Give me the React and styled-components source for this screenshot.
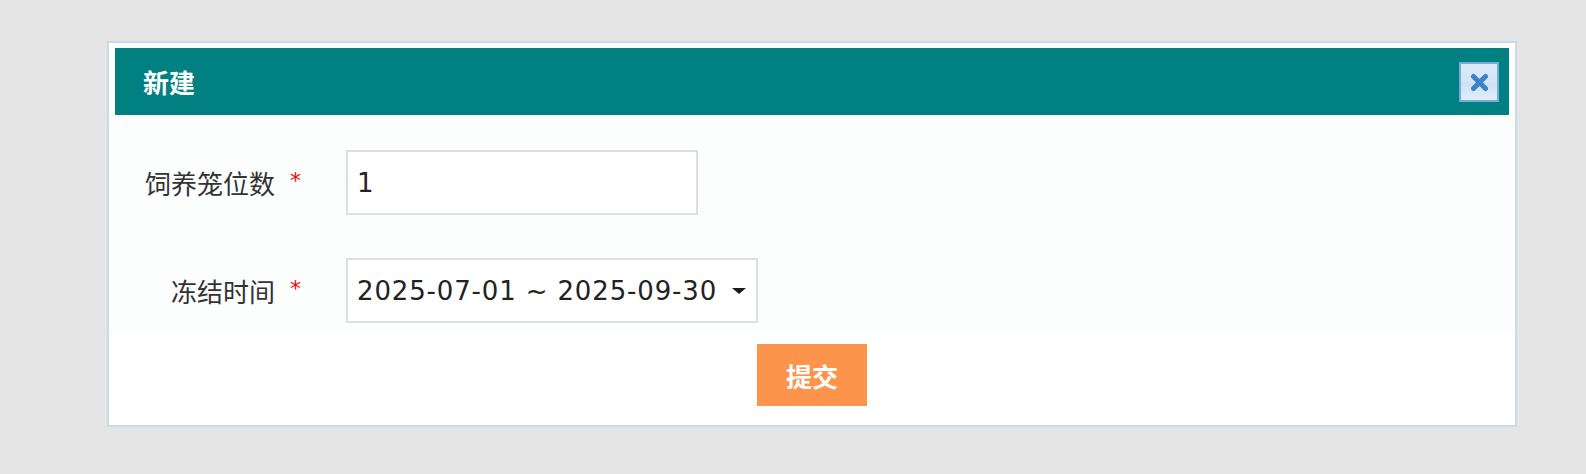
import React from "react";
import styled, { createGlobalStyle } from "styled-components";

const Global = createGlobalStyle`
  html, body { margin: 0; padding: 0; background: #e5e5e5; }
  body { font-family: "Noto Sans CJK SC", "Noto Sans", sans-serif; }
  * { box-sizing: border-box; }
`;

const Page = styled.div`
  padding: 41px 0 0 107px;
  height: 474px;
`;

const Dialog = styled.div`
  width: 1410px;
  height: 386px;
  border: 2px solid #c7dbeb;
  background: #ffffff;
  padding-top: 5px;
  display: flex;
  flex-direction: column;
`;

const Header = styled.div`
  margin: 0 6px;
  height: 67px;
  background: #008080;
  display: flex;
  align-items: center;
  justify-content: space-between;
  padding: 0 10px 0 28px;
`;

const Title = styled.div`
  color: #ffffff;
  font-family: "Noto Sans CJK SC", sans-serif;
  font-weight: 700;
  font-size: 26px;
  line-height: 1;
`;

const CloseButton = styled.button`
  width: 40px;
  height: 40px;
  padding: 0;
  border: 2px solid #74acdf;
  background: linear-gradient(#dce9f8 0%, #d6e6f7 48%, #cde1f5 52%, #e2eefa 100%);
  display: flex;
  align-items: center;
  justify-content: center;
  cursor: pointer;
  margin-top: 1px;
`;

const FormArea = styled.div`
  background: #fcfefd;
  padding: 35px 0 10px;
  display: flex;
  flex-direction: column;
  gap: 43px;
`;

const Row = styled.div`
  display: flex;
  align-items: center;
  height: 65px;
`;

const Label = styled.div`
  width: 166px;
  text-align: right;
  font-family: "Noto Sans CJK SC", sans-serif;
  font-size: 26px;
  color: #333333;
  line-height: 1;
`;

const Star = styled.span`
  width: 12px;
  margin-left: 15px;
  color: #ff0000;
  font-family: "DejaVu Sans", sans-serif;
  font-size: 22px;
  line-height: 1;
  align-self: center;
  margin-top: -4px;
`;

const Field = styled.div`
  margin-left: 44px;
  width: ${(p) => p.$width}px;
  height: 65px;
  border: 2px solid #dfdfdf;
  background: #ffffff;
  display: flex;
  align-items: center;
  padding: 0 10px 0 9px;
  font-family: "DejaVu Sans", sans-serif;
  font-size: 26px;
  letter-spacing: ${(p) => p.$spacing || 0}px;
  color: #222222;
  cursor: ${(p) => (p.$select ? "pointer" : "text")};
`;

const Caret = styled.span`
  margin-left: auto;
  width: 0;
  height: 0;
  border-left: 7px solid transparent;
  border-right: 7px solid transparent;
  border-top: 6px solid #1a1a1a;
`;

const Footer = styled.div`
  display: flex;
  justify-content: center;
  padding-top: 11px;
`;

const Submit = styled.button`
  width: 110px;
  height: 62px;
  border: none;
  background: #fd944b;
  color: #ffffff;
  font-family: "Noto Sans CJK SC", sans-serif;
  font-weight: 700;
  font-size: 26px;
  cursor: pointer;
  padding: 0;
`;

export default function App() {
  return (
    <>
      <Global />
      <Page>
        <Dialog>
          <Header>
            <Title>新建</Title>
            <CloseButton aria-label="关闭">
              <svg width="19" height="19" viewBox="0 0 19 19">
                <path
                  d="M3.5 3.5 L15.5 15.5 M15.5 3.5 L3.5 15.5"
                  stroke="#3b82c9"
                  strokeWidth="5"
                  strokeLinecap="round"
                  fill="none"
                />
              </svg>
            </CloseButton>
          </Header>
          <FormArea>
            <Row>
              <Label>饲养笼位数</Label>
              <Star>*</Star>
              <Field $width={352}>1</Field>
            </Row>
            <Row>
              <Label>冻结时间</Label>
              <Star>*</Star>
              <Field $width={412} $spacing={0.85} $select>
                2025-07-01 ~ 2025-09-30
                <Caret />
              </Field>
            </Row>
          </FormArea>
          <Footer>
            <Submit>提交</Submit>
          </Footer>
        </Dialog>
      </Page>
    </>
  );
}
